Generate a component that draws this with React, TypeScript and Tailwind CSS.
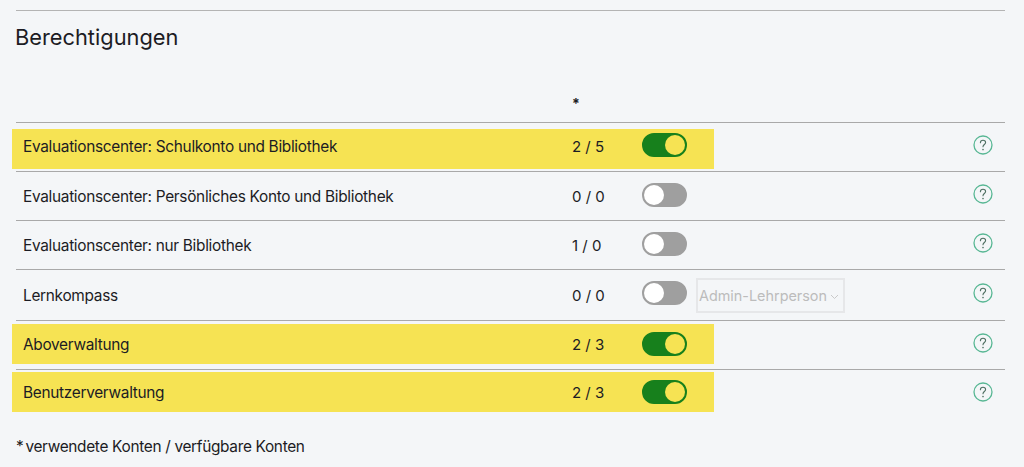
import React from "react";

type Row = {
  label: string;
  count: string;
  on: boolean;
  rowClass: string;
  bandClass: string;
  textPad: string;
  togglePad: string;
  helpClass: string;
  select?: boolean;
};

const rows: Row[] = [
  { label: "Evaluationscenter: Schulkonto und Bibliothek", count: "2 / 5", on: true, rowClass: "h-[49px]", bandClass: "mt-[6px] bg-[#f6e353]", textPad: "pt-[7px]", togglePad: "pt-1", helpClass: "mt-[12px]" },
  { label: "Evaluationscenter: Persönliches Konto und Bibliothek", count: "0 / 0", on: false, rowClass: "h-[49px]", bandClass: "mt-[6px]", textPad: "pt-[8px]", togglePad: "pt-[5px]", helpClass: "mt-[12px]" },
  { label: "Evaluationscenter: nur Bibliothek", count: "1 / 0", on: false, rowClass: "h-[49px]", bandClass: "mt-[6px]", textPad: "pt-[8px]", togglePad: "pt-[5px]", helpClass: "mt-[12px]" },
  { label: "Lernkompass", count: "0 / 0", on: false, rowClass: "h-[51px]", bandClass: "mt-[6px]", textPad: "pt-[9px]", togglePad: "pt-[5px]", helpClass: "mt-[13px]", select: true },
  { label: "Aboverwaltung", count: "2 / 3", on: true, rowClass: "h-[49px]", bandClass: "mt-[3px] bg-[#f6e353]", textPad: "pt-[10px]", togglePad: "pt-2", helpClass: "mt-[12px]" },
  { label: "Benutzerverwaltung", count: "2 / 3", on: true, rowClass: "h-[49px]", bandClass: "mt-[2px] bg-[#f6e353]", textPad: "pt-[10px]", togglePad: "pt-2", helpClass: "mt-[12px]" },
];

function Toggle({ on }: { on: boolean }) {
  return (
    <div
      className={
        on
          ? "flex h-6 w-[45px] items-center justify-end rounded-full border-2 border-[#17801c] bg-[#17801c]"
          : "flex h-6 w-[45px] items-center justify-start rounded-full border-2 border-[#9f9f9f] bg-[#9f9f9f]"
      }
    >
      <div className={on ? "h-5 w-5 rounded-full bg-[#f6e353]" : "h-5 w-5 rounded-full bg-white"} />
    </div>
  );
}

function Help({ className }: { className: string }) {
  return (
    <svg width="20" height="20" viewBox="0 0 20 20" fill="none" className={className}>
      <circle cx="10" cy="10" r="9" stroke="#58b794" strokeWidth="1.3" />
      <path d="M7.4 7.7c0-1.5 1.1-2.4 2.6-2.4s2.6.9 2.6 2.2c0 2-2.6 2.1-2.6 4.3" stroke="#4f6f62" strokeWidth="1.1" strokeLinecap="round" />
      <circle cx="10" cy="14.6" r="0.8" fill="#4f6f62" />
    </svg>
  );
}

export default function App() {
  return (
    <div className="h-[467px] w-[1024px] overflow-hidden bg-[#f4f6f8] pl-4 pr-[19px] pt-[10px] font-['Inter',sans-serif] text-[#1c1c24]">
      <div className="border-t border-[#b4b4b4]">
        <h2 className="mt-[12px] -ml-[1px] text-[21.8px] leading-7 font-normal">Berechtigungen</h2>
        <div className="mt-[43px] h-[28px] pl-[556px] text-[14px] leading-5 font-bold">*</div>
      </div>
      <div>
        {rows.map((r) => (
          <div key={r.label} className={`flex border-t border-[#a9a9a9] ${r.rowClass}`}>
            <div className={`-ml-1 flex h-10 w-[702px] shrink-0 pl-[11px] ${r.bandClass}`}>
              <div className={`w-[549px] shrink-0 text-[15.4px] leading-[22px] tracking-[-0.3px] ${r.textPad}`}>{r.label}</div>
              <div className={`w-[70px] shrink-0 text-[15px] leading-[22px] ${r.textPad}`}>{r.count}</div>
              <div className={`shrink-0 ${r.togglePad}`}>
                <Toggle on={r.on} />
              </div>
              {r.select && (
                <div className="ml-[9px] mt-[2px] flex h-[35px] w-[149px] shrink-0 items-center border-2 border-[#e6e7e9] pl-[1px] text-[14.4px] text-[#bcbcbc]">
                  Admin-Lehrperson
                  <svg width="9" height="6" viewBox="0 0 9 6" fill="none" className="ml-[3px] mt-[2px] shrink-0">
                    <path d="M1 1l3.5 3.5L8 1" stroke="#c9c9c9" strokeWidth="1" />
                  </svg>
                </div>
              )}
            </div>
            <div className="ml-[259px]">
              <Help className={r.helpClass} />
            </div>
          </div>
        ))}
      </div>
      <p className="mt-[18px] text-[15.4px] leading-[22px] tracking-[-0.32px]">
        <span className="-mr-[2px]">*</span> verwendete Konten / verfügbare Konten
      </p>
    </div>
  );
}
